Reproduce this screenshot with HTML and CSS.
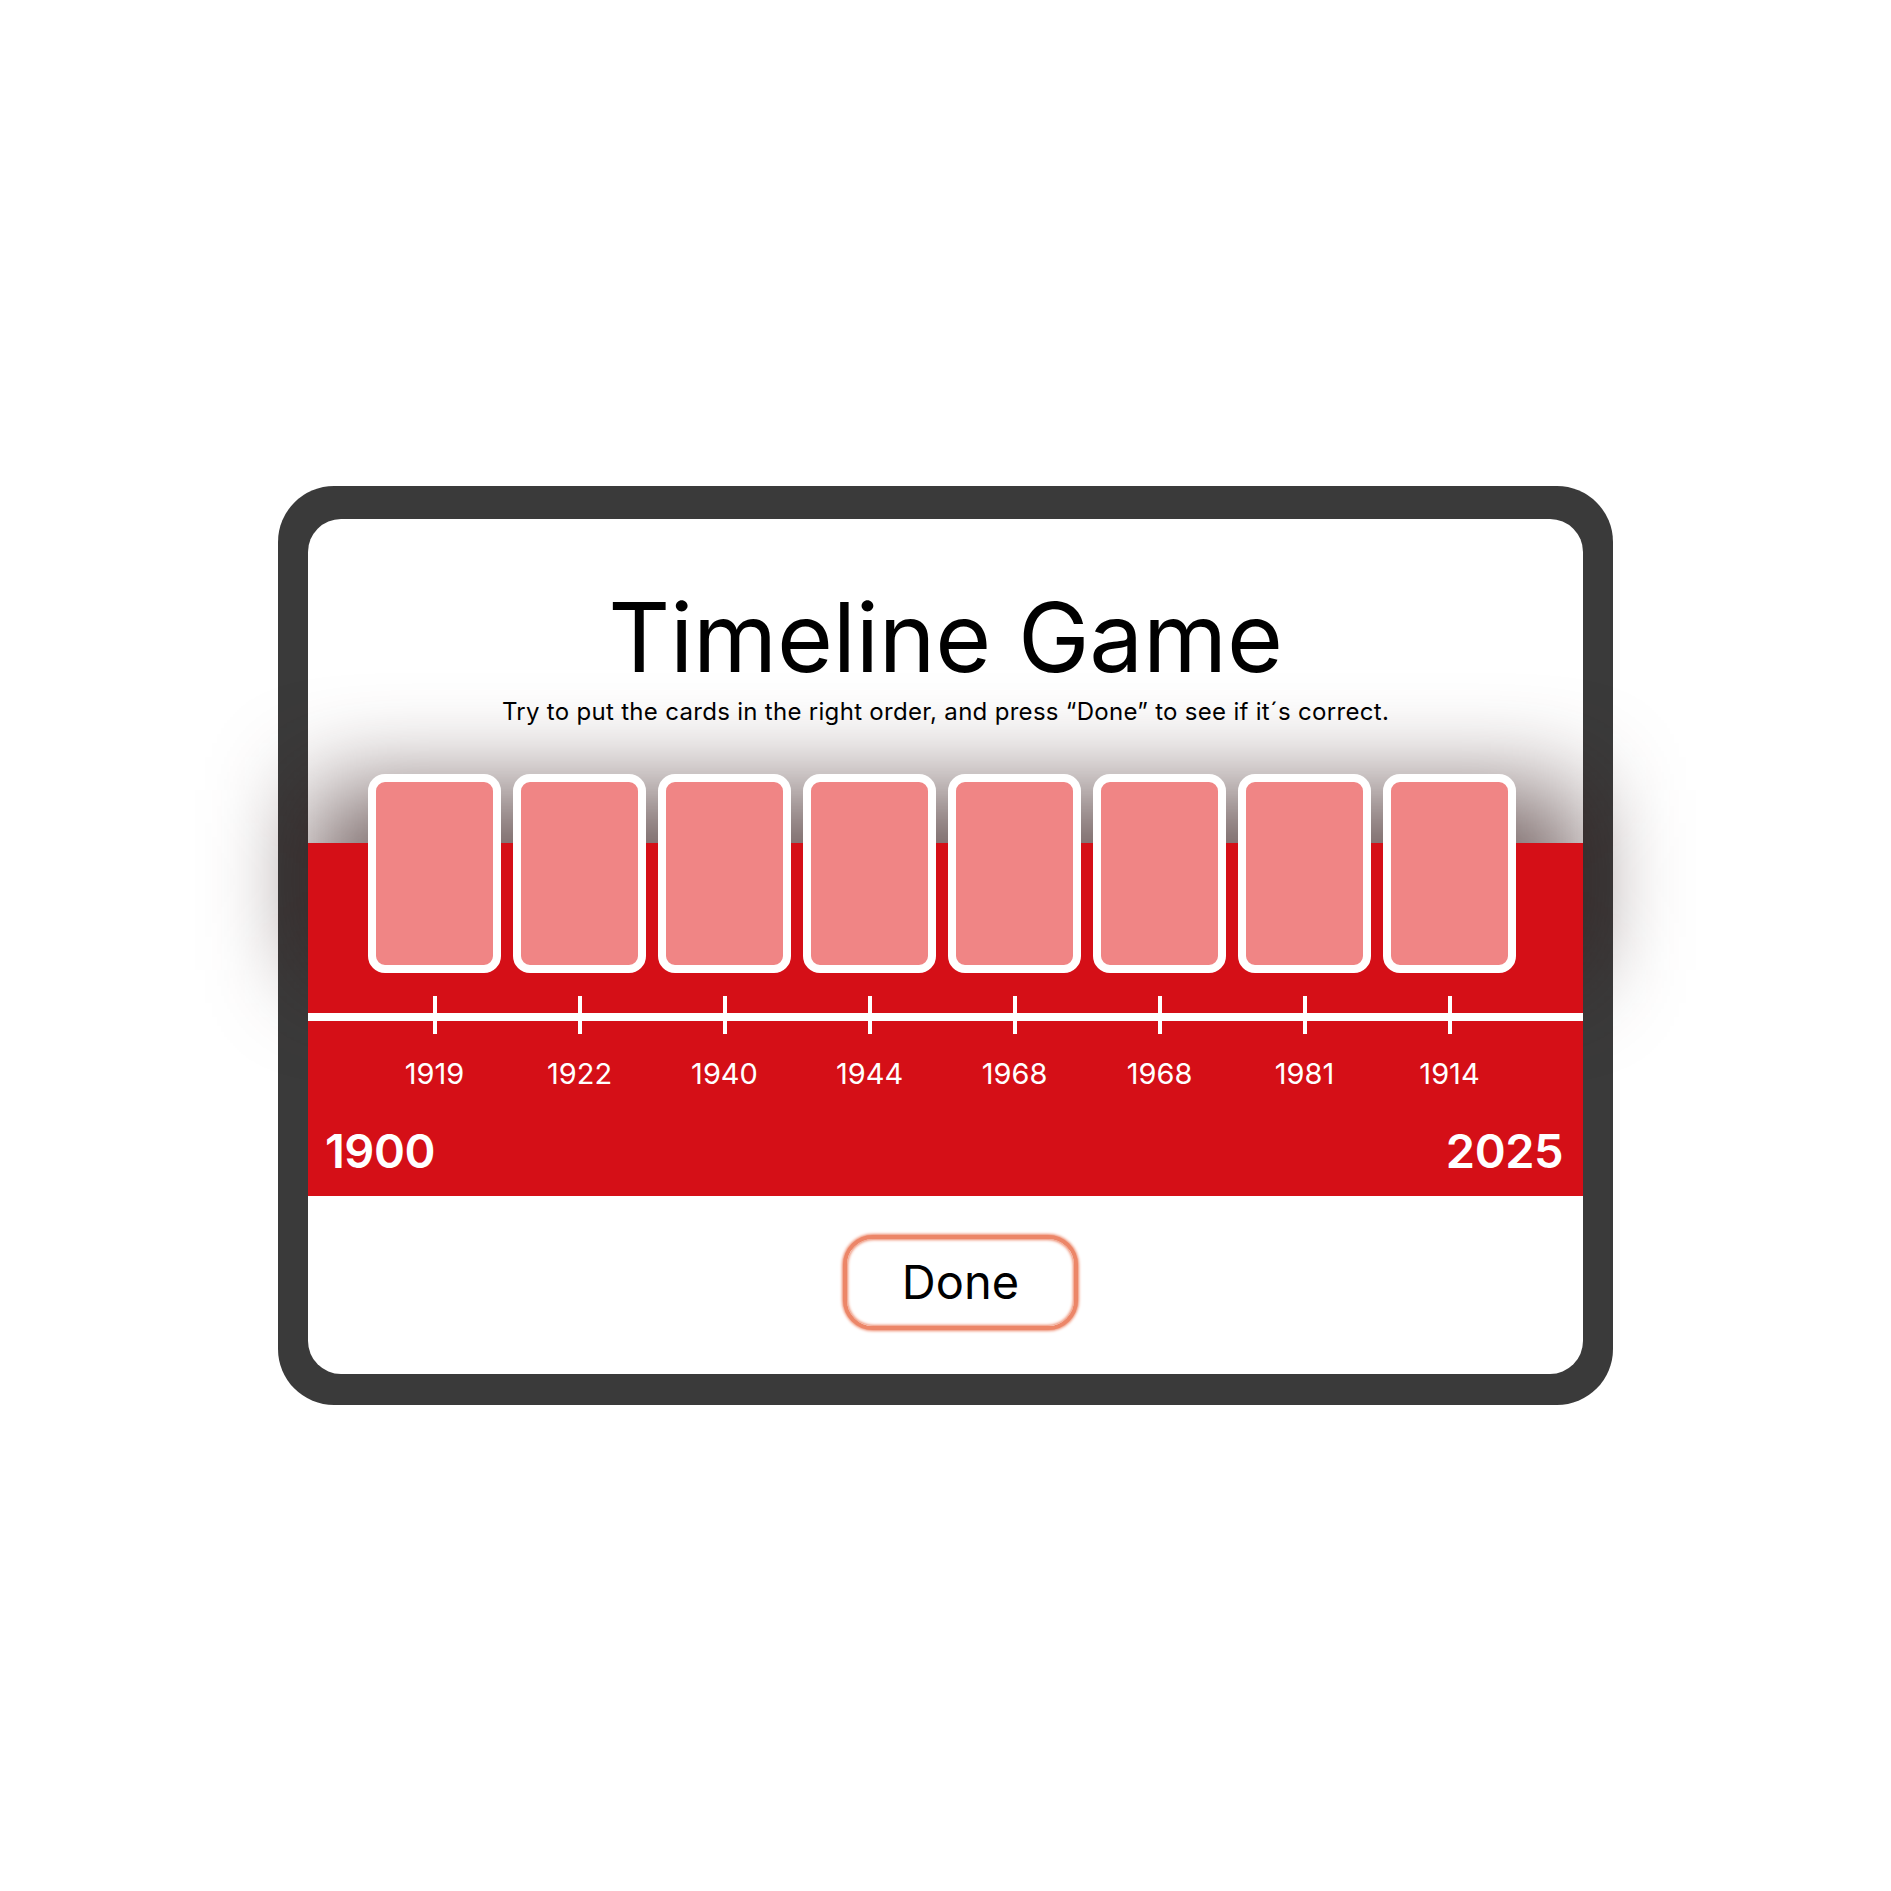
FILE: index.html
```html
<!DOCTYPE html>
<html lang="en">
<head>
<meta charset="utf-8">
<title>Timeline Game</title>
<link rel="stylesheet" href="styles.css">
</head>
<body>
<div class="frame">
  <div class="screen">
    <header class="head">
      <h1 class="title">Timeline Game</h1>
      <p class="subtitle">Try to put the cards in the right order, and press “Done” to see if it´s correct.</p>
    </header>
    <div class="stage">
      <div class="cards-row">
        <div class="card"></div>
        <div class="card"></div>
        <div class="card"></div>
        <div class="card"></div>
        <div class="card"></div>
        <div class="card"></div>
        <div class="card"></div>
        <div class="card"></div>
      </div>
      <div class="band">
        <div class="axis">
          <span class="tick"></span><span class="tick"></span><span class="tick"></span><span class="tick"></span>
          <span class="tick"></span><span class="tick"></span><span class="tick"></span><span class="tick"></span>
        </div>
        <div class="labels">
          <span class="label">1919</span>
          <span class="label">1922</span>
          <span class="label">1940</span>
          <span class="label">1944</span>
          <span class="label">1968</span>
          <span class="label">1968</span>
          <span class="label">1981</span>
          <span class="label">1914</span>
        </div>
        <div class="ends">
          <span class="end">1900</span>
          <span class="end">2025</span>
        </div>
      </div>
    </div>
    <div class="actions">
      <button class="done" type="button">Done</button>
    </div>
  </div>
</div>
</body>
</html>
```
FILE: styles.css
```css
html, body {
  margin: 0;
  padding: 0;
  background: #ffffff;
}

body {
  width: 1891px;
  height: 1891px;
  font-family: Inter, "Noto Sans", sans-serif;
  color: #000;
}

.frame {
  box-sizing: border-box;
  width: 1335px;
  height: 919px;
  margin: 486px auto 0;
  padding: 33px 30px 31px 30px;
  background: #3a3a3a;
  border-radius: 56px;
}

.screen {
  position: relative;
  z-index: 0;
  height: 855px;
  background: #ffffff;
  border-radius: 33px;
  display: flex;
  flex-direction: column;
}

.head {
  padding-top: 70px;
  text-align: center;
}

.title {
  margin: 0;
  font-size: 96px;
  line-height: 96px;
  font-weight: 400;
  letter-spacing: -0.2px;
}

.subtitle {
  margin: 15px 0 0;
  font-size: 24px;
  line-height: 24px;
  font-weight: 400;
  letter-spacing: 0.3px;
}

.stage {
  margin-top: 50px;
}

.cards-row {
  position: relative;
  display: flex;
  gap: 12px;
  padding-left: 60px;
  height: 199px;
  margin-bottom: -130px;
}

.cards-row::before {
  content: "";
  position: absolute;
  left: 4px;
  right: 4px;
  top: 16px;
  bottom: 3px;
  background: rgba(52, 25, 25, 0.7);
  filter: blur(50px);
  z-index: -1;
}

.card {
  position: relative;
  z-index: 2;
  box-sizing: border-box;
  width: 133px;
  height: 199px;
  background: #f08585;
  border: 8px solid #ffffff;
  border-radius: 17px;
}

.band {
  position: relative;
  z-index: 1;
  background: #d50f17;
  padding-top: 153px;
  padding-bottom: 22px;
  color: #ffffff;
}

.axis {
  display: flex;
  gap: 12px;
  padding-left: 60px;
  height: 38px;
  background: linear-gradient(#ffffff, #ffffff) 0 17px / 100% 8px no-repeat;
}

.tick {
  width: 133px;
  display: flex;
  justify-content: center;
}

.tick::before {
  content: "";
  width: 4px;
  height: 38px;
  background: #ffffff;
}

.labels {
  display: flex;
  gap: 12px;
  padding-left: 60px;
  margin-top: 25px;
}

.label {
  width: 133px;
  text-align: center;
  font-size: 29px;
  line-height: 29px;
}

.ends {
  display: flex;
  justify-content: space-between;
  padding: 0 20px 0 17px;
  margin-top: 39px;
}

.end {
  font-size: 47px;
  line-height: 47px;
  font-weight: 600;
  letter-spacing: -0.5px;
}

.actions {
  display: flex;
  justify-content: center;
  margin-top: 39px;
}

.done {
  box-sizing: border-box;
  width: 235px;
  height: 95px;
  margin-left: 30px;
  background: #ffffff;
  border: 4px solid #ec8668;
  border-radius: 30px;
  box-shadow: 0 0 3px 1px #ec8668, inset 0 0 3px 1px #ec8668;
  font-family: Inter, "Noto Sans", sans-serif;
  font-size: 47px;
  line-height: 47px;
  color: #000;
  padding: 0 0 2px;
}
```
